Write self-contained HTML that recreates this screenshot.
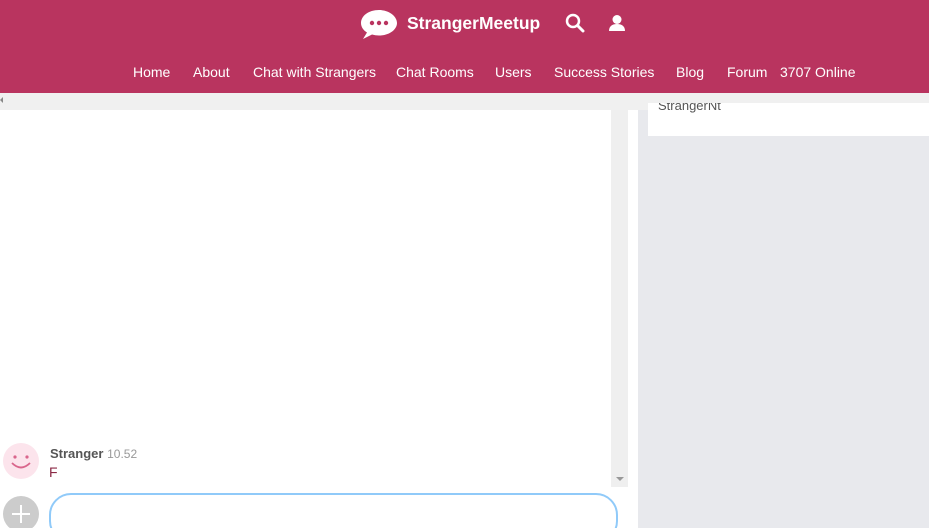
<!DOCTYPE html>
<html><head><style>
*{margin:0;padding:0;box-sizing:border-box}
html,body{width:929px;height:528px;overflow:hidden}
body{background:#fff;font-family:"Liberation Sans",Arial,sans-serif;position:relative}
.hdr{position:absolute;left:0;top:0;width:929px;height:93px;background:#b9345f}
.logo{position:absolute;left:407px;top:13px;color:#fff;font-size:17.5px;font-weight:bold}
.nav{position:absolute;top:64px;color:#fff;font-size:14px}
.abs{position:absolute}
</style></head><body>
<div class="hdr">
<svg class="abs" style="left:359px;top:8px" width="40" height="32" viewBox="0 0 40 32"><path d="M20 2C9.5 2 2 8 2 15c0 4 2.5 7.5 6 9.5L4 31l9-4.5c2.2.6 4.5 1 7 1 10.5 0 18-6 18-12.5S30.5 2 20 2z" fill="#fff"/><circle cx="13" cy="15" r="2.2" fill="#b9345f"/><circle cx="20" cy="15" r="2.2" fill="#b9345f"/><circle cx="27" cy="15" r="2.2" fill="#b9345f"/></svg>
<div class="logo">StrangerMeetup</div>
<svg class="abs" style="left:565px;top:13px" width="20" height="20" viewBox="0 0 20 20"><circle cx="8" cy="8" r="6" stroke="#fff" stroke-width="2.5" fill="none"/><path d="M12.5 12.5L18 18" stroke="#fff" stroke-width="3" stroke-linecap="round"/></svg>
<svg class="abs" style="left:608px;top:14px" width="18" height="18" viewBox="0 0 18 18"><circle cx="9" cy="5.5" r="4.5" fill="#fff"/><path d="M1 17c0-5 3.5-7 8-7s8 2 8 7z" fill="#fff"/></svg>
<div class="nav" style="left:133px">Home</div>
<div class="nav" style="left:193px">About</div>
<div class="nav" style="left:253px">Chat with Strangers</div>
<div class="nav" style="left:396px">Chat Rooms</div>
<div class="nav" style="left:495px">Users</div>
<div class="nav" style="left:554px">Success Stories</div>
<div class="nav" style="left:676px">Blog</div>
<div class="nav" style="left:727px">Forum</div>
<div class="nav" style="left:780px">3707 Online</div>
</div>
<div class="abs" style="left:0;top:93px;width:929px;height:17px;background:#f0f0f0"></div>
<div class="abs" style="left:0;top:97px;width:0;height:0;border-top:3px solid transparent;border-bottom:3px solid transparent;border-right:3px solid #888"></div>
<div class="abs" style="left:638px;top:110px;width:291px;height:418px;background:#e8e9ed"></div>
<div class="abs" style="left:648px;top:93px;width:281px;height:43px;background:#fff;overflow:hidden"><div style="position:absolute;left:10px;top:5px;font-size:13px;color:#555">StrangerNt</div></div>
<div class="abs" style="left:648px;top:93px;width:281px;height:10px;background:#f0f0f0"></div>
<div class="abs" style="left:611px;top:110px;width:17px;height:377px;background:#efefef"></div>
<div class="abs" style="left:616px;top:477px;width:0;height:0;border-left:4px solid transparent;border-right:4px solid transparent;border-top:4px solid #999"></div>
<svg class="abs" style="left:3px;top:443px" width="36" height="36" viewBox="0 0 36 36"><circle cx="18" cy="18" r="18" fill="#fce4ec"/><circle cx="12" cy="14" r="1.6" fill="#d9668c"/><circle cx="24" cy="14" r="1.6" fill="#d9668c"/><path d="M9 20q9 9 18 0" stroke="#d9668c" stroke-width="1.8" fill="none"/></svg>
<div class="abs" style="left:50px;top:446px;font-size:13px;color:#555"><b>Stranger</b> <span style="color:#999;font-size:12px">10.52</span></div>
<div class="abs" style="left:49px;top:464px;font-size:14px;color:#8b2945">F</div>
<svg class="abs" style="left:3px;top:496px" width="36" height="36" viewBox="0 0 36 36"><circle cx="18" cy="18" r="18" fill="#ccc"/><path d="M18 9v18M9 18h18" stroke="#fff" stroke-width="2"/></svg>
<div class="abs" style="left:49px;top:493px;width:569px;height:50px;border:2px solid #90caf9;border-radius:22px"></div>
</body></html>
